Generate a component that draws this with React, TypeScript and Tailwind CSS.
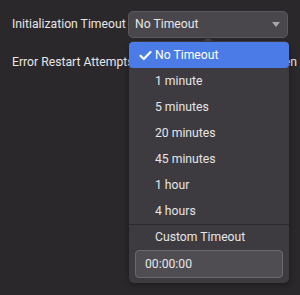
const OPTIONS = ["No Timeout", "1 minute", "5 minutes", "20 minutes", "45 minutes", "1 hour", "4 hours"];

function Check() {
  return (
    <svg width="13" height="11" viewBox="0 0 13 11" fill="none">
      <path d="M1.5 5.8 L4.8 9 L11.5 2" stroke="#ffffff" strokeWidth="2.2" strokeLinecap="round" strokeLinejoin="round" />
    </svg>
  );
}

export default function App() {
  return (
    <div
      className="relative w-[300px] h-[295px] overflow-hidden bg-[#2a282b] text-[12.2px] text-[#e6e5e7]"
      style={{ fontFamily: 'Roboto, "Noto Sans", sans-serif' }}
    >
      <div className="flex flex-col pt-[11px]">
        {/* Row 1 */}
        <div className="flex items-center">
          <span className="w-[128px] shrink-0 pl-[12px] whitespace-nowrap">Initialization Timeout</span>
          <div className="flex items-center justify-between w-[160px] h-[27px] rounded-[5px] border border-[#5b595d] bg-[#49474b] pl-[6px] pr-[7px]">
            <span>No Timeout</span>
            <svg width="8" height="5" viewBox="0 0 8 5">
              <path d="M0 0 L8 0 L4 5 Z" fill="#a9a7ab" />
            </svg>
          </div>
        </div>
        {/* Row 2 */}
        <div className="flex items-center mt-[11px] h-[26px]">
          <span className="w-[128px] shrink-0 pl-[12px] whitespace-nowrap">Error Restart Attempts</span>
          <span className="w-[169px] shrink-0 text-right whitespace-nowrap">Restart Then</span>
        </div>
      </div>

      {/* Dropdown menu */}
      <div className="absolute left-[129px] top-[41px] w-[160px]">
        <div className="absolute left-[74px] -top-[4px] w-0 h-0 border-x-[5px] border-x-transparent border-b-[4px] border-b-[#3d3b3f]" />
        <div className="rounded-[5px] bg-[#3d3b3f] pt-[1px] pb-[5px] shadow-[0_2px_6px_rgba(0,0,0,0.35)]">
          {OPTIONS.map((o, i) => (
            <div
              key={o}
              className={
                i === 0
                  ? "flex items-center h-[26px] rounded-[4px] bg-[#4a7be7] text-white"
                  : "flex items-center h-[26px]"
              }
            >
              <span className="w-[26px] shrink-0 flex justify-end pr-[3px]">{i === 0 && <Check />}</span>
              <span>{o}</span>
            </div>
          ))}
          <div className="h-px bg-[#2c2a2d]" />
          <div className="flex items-center h-[25px] pl-[26px]">Custom Timeout</div>
          <div className="mx-[6px] h-[28px] flex items-center rounded-[4px] border border-[#6a686c] bg-[#4f4d51] pl-[9px]">
            00:00:00
          </div>
        </div>
      </div>
    </div>
  );
}
